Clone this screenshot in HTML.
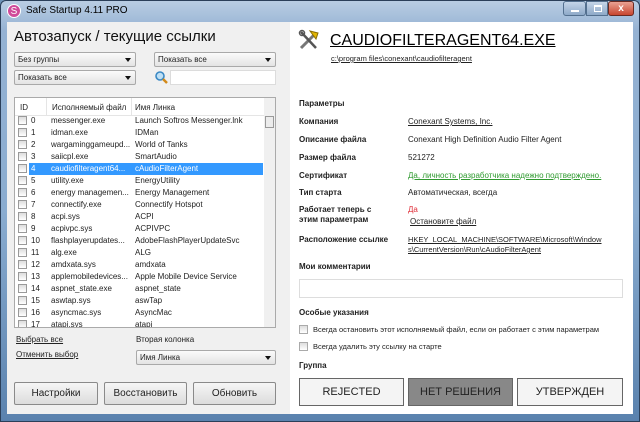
<!DOCTYPE html>
<html><head><meta charset="utf-8"><style>
*{box-sizing:border-box;margin:0;padding:0}
body{width:640px;height:422px;overflow:hidden;font-family:"Liberation Sans","DejaVu Sans",sans-serif;font-size:9px;color:#222;background:#6d93b8;position:relative}
.a{position:absolute;white-space:nowrap}
.frame{position:absolute;left:0;top:0;width:640px;height:422px;background:linear-gradient(#b9cde3,#95b2d3 30px,#8aacd0 50%,#5a82ae);border:1px solid #2b3f59;border-radius:6px 6px 0 0}
.left{position:absolute;left:7px;top:22px;width:283px;height:392px;background:#f0f0f0}
.right{position:absolute;left:290px;top:22px;width:343px;height:392px;background:#fff}
.combo{position:absolute;height:15px;background:linear-gradient(#fbfbfb,#e3e3e3);border:1px solid #a9a9a9;border-radius:2px;font-size:8px;padding:2px 3px}
.combo:after{content:"";position:absolute;right:4px;top:5px;border:3.5px solid transparent;border-top:4px solid #111}
.btn{position:absolute;background:linear-gradient(#f6f6f6,#dcdcdc);border:1px solid #8a8a8a;border-radius:2px;text-align:center;font-size:10px}
.row{position:absolute;left:0;width:249px;height:12px;font-size:8px}
.row .cb{position:absolute;left:4px;top:1px;width:9px;height:9px;border:1px solid #999;background:linear-gradient(#ddd,#fff)}
.row span{position:absolute;top:0;line-height:12px}
.lbl{position:absolute;left:299px;font-weight:bold;font-size:8px;white-space:nowrap}
.val{position:absolute;left:408px;font-size:8px;white-space:nowrap}
u{text-decoration:underline}
.rb{position:absolute;top:378px;height:28px;border:1px solid #666;background:#f4f4f4;text-align:center;line-height:26px;font-size:11px}
</style></head><body>
<div class="frame"></div>
<div class="a" style="left:7px;top:4px;width:14px;height:14px;border-radius:50%;background:#d04a9a;color:#fff;font-size:10px;text-align:center;line-height:13px;border:1px solid #fff">S</div>
<div class="a" style="left:26px;top:5px;font-size:10px;color:#000">Safe Startup 4.11 PRO</div>
<div class="a" style="left:563px;top:1px;width:23px;height:15px;border:1px solid #54708f;border-radius:3px;background:linear-gradient(#c5d5e8,#8ea9c8)"><div style="position:absolute;left:7px;top:8px;width:8px;height:2px;background:#fff"></div></div>
<div class="a" style="left:586px;top:1px;width:22px;height:15px;border:1px solid #54708f;background:linear-gradient(#c5d5e8,#8ea9c8)"><div style="position:absolute;left:7px;top:3px;width:8px;height:7px;border:1px solid #fff;border-top-width:2px"></div></div>
<div class="a" style="left:608px;top:1px;width:26px;height:15px;border:1px solid #6b2a22;border-radius:3px;background:linear-gradient(#e9a293,#c8452f);color:#fff;font-weight:bold;font-size:10px;text-align:center;line-height:13px">x</div>

<div class="left"></div>
<div class="right"></div>

<div class="a" style="left:14px;top:28px;font-size:15px;color:#111">Автозапуск / текущие ссылки</div>
<div class="combo" style="left:14px;top:52px;width:122px">Без группы</div>
<div class="combo" style="left:154px;top:52px;width:122px">Показать все</div>
<div class="combo" style="left:14px;top:70px;width:122px">Показать все</div>
<svg class="a" style="left:154px;top:70px" width="14" height="14"><circle cx="6" cy="6" r="4" fill="#bfe0f5" stroke="#3a88c4" stroke-width="1.6"/><line x1="9" y1="9" x2="13" y2="13" stroke="#d28a1a" stroke-width="2.5"/></svg>
<div class="a" style="left:170px;top:70px;width:106px;height:15px;background:#fff;border:1px solid #dcdcdc"></div>

<div class="a" style="left:14px;top:97px;width:262px;height:231px;background:#fff;border:1px solid #aaa;overflow:hidden">
 <div class="a" style="left:0;top:0;width:249px;height:18px;border-bottom:1px solid #e5e5e5;font-size:8px">
  <span class="a" style="left:5px;top:5px">ID</span><span class="a" style="left:37px;top:5px">Исполняемый файл</span><span class="a" style="left:120px;top:5px">Имя Линка</span>
  <div class="a" style="left:31px;top:0;width:1px;height:18px;background:#e5e5e5"></div>
  <div class="a" style="left:116px;top:0;width:1px;height:18px;background:#e5e5e5"></div>
 </div>
 <div class="a" style="left:249px;top:0;width:12px;height:229px;background:#f0f0f0"><div style="position:absolute;left:1px;top:18px;width:9px;height:12px;border:1px solid #999;background:#ececec"></div></div>
</div>
<div class="a" style="left:14px;top:115px">
<div class="row" style="top:0"><div class="cb"></div><span style="left:17px">0</span><span style="left:37px">messenger.exe</span><span style="left:121px">Launch Softros Messenger.lnk</span></div>
<div class="row" style="top:12px"><div class="cb"></div><span style="left:17px">1</span><span style="left:37px">idman.exe</span><span style="left:121px">IDMan</span></div>
<div class="row" style="top:24px"><div class="cb"></div><span style="left:17px">2</span><span style="left:37px">wargaminggameupd...</span><span style="left:121px">World of Tanks</span></div>
<div class="row" style="top:36px"><div class="cb"></div><span style="left:17px">3</span><span style="left:37px">saiicpl.exe</span><span style="left:121px">SmartAudio</span></div>
<div class="row" style="top:48px;color:#fff"><div style="position:absolute;left:15px;top:0;width:234px;height:12px;background:#3399ff"></div><div class="cb"></div><span style="left:17px">4</span><span style="left:37px">caudiofilteragent64...</span><span style="left:121px">cAudioFilterAgent</span></div>
<div class="row" style="top:60px"><div class="cb"></div><span style="left:17px">5</span><span style="left:37px">utility.exe</span><span style="left:121px">EnergyUtility</span></div>
<div class="row" style="top:72px"><div class="cb"></div><span style="left:17px">6</span><span style="left:37px">energy managemen...</span><span style="left:121px">Energy Management</span></div>
<div class="row" style="top:84px"><div class="cb"></div><span style="left:17px">7</span><span style="left:37px">connectify.exe</span><span style="left:121px">Connectify Hotspot</span></div>
<div class="row" style="top:96px"><div class="cb"></div><span style="left:17px">8</span><span style="left:37px">acpi.sys</span><span style="left:121px">ACPI</span></div>
<div class="row" style="top:108px"><div class="cb"></div><span style="left:17px">9</span><span style="left:37px">acpivpc.sys</span><span style="left:121px">ACPIVPC</span></div>
<div class="row" style="top:120px"><div class="cb"></div><span style="left:17px">10</span><span style="left:37px">flashplayerupdates...</span><span style="left:121px">AdobeFlashPlayerUpdateSvc</span></div>
<div class="row" style="top:132px"><div class="cb"></div><span style="left:17px">11</span><span style="left:37px">alg.exe</span><span style="left:121px">ALG</span></div>
<div class="row" style="top:144px"><div class="cb"></div><span style="left:17px">12</span><span style="left:37px">amdxata.sys</span><span style="left:121px">amdxata</span></div>
<div class="row" style="top:156px"><div class="cb"></div><span style="left:17px">13</span><span style="left:37px">applemobiledevices...</span><span style="left:121px">Apple Mobile Device Service</span></div>
<div class="row" style="top:168px"><div class="cb"></div><span style="left:17px">14</span><span style="left:37px">aspnet_state.exe</span><span style="left:121px">aspnet_state</span></div>
<div class="row" style="top:180px"><div class="cb"></div><span style="left:17px">15</span><span style="left:37px">aswtap.sys</span><span style="left:121px">aswTap</span></div>
<div class="row" style="top:192px"><div class="cb"></div><span style="left:17px">16</span><span style="left:37px">asyncmac.sys</span><span style="left:121px">AsyncMac</span></div>
<div class="row" style="top:204px;height:8px;overflow:hidden"><div class="cb"></div><span style="left:17px">17</span><span style="left:37px">atapi.sys</span><span style="left:121px">atapi</span></div>
</div>

<div class="a" style="left:16px;top:335px;font-size:8px"><u>Выбрать все</u></div>
<div class="a" style="left:16px;top:350px;font-size:8px"><u>Отменить выбор</u></div>
<div class="a" style="left:136px;top:335px;font-size:8px">Вторая колонка</div>
<div class="combo" style="left:136px;top:350px;width:140px">Имя Линка</div>
<div class="btn" style="left:14px;top:382px;width:84px;height:23px;line-height:21px">Настройки</div>
<div class="btn" style="left:104px;top:382px;width:83px;height:23px;line-height:21px">Восстановить</div>
<div class="btn" style="left:193px;top:382px;width:83px;height:23px;line-height:21px">Обновить</div>

<svg class="a" style="left:298px;top:29px" width="22" height="22"><line x1="3" y1="19" x2="17" y2="5" stroke="#777" stroke-width="3"/><line x1="3" y1="3" x2="18" y2="19" stroke="#555" stroke-width="2.5"/><path d="M12 2 L20 4 L18 10 Z" fill="#e2b500" stroke="#8a6c00" stroke-width="1"/><circle cx="4" cy="4" r="2.5" fill="none" stroke="#555" stroke-width="1.5"/></svg>
<div class="a" style="left:330px;top:32px;font-size:16px;color:#000"><u>CAUDIOFILTERAGENT64.EXE</u></div>
<div class="a" style="left:331px;top:54px;font-size:7.5px"><u>c:\program files\conexant\caudiofilteragent</u></div>

<div class="lbl" style="top:99px">Параметры</div>
<div class="lbl" style="top:117px">Компания</div><div class="val" style="top:117px"><u>Conexant Systems, Inc.</u></div>
<div class="lbl" style="top:135px">Описание файла</div><div class="val" style="top:135px">Conexant High Definition Audio Filter Agent</div>
<div class="lbl" style="top:153px">Размер файла</div><div class="val" style="top:153px">521272</div>
<div class="lbl" style="top:171px">Сертификат</div><div class="val" style="top:171px;color:#2f9a2f"><u>Да, личность разработчика надежно подтверждено.</u></div>
<div class="lbl" style="top:188px">Тип старта</div><div class="val" style="top:188px">Автоматическая, всегда</div>
<div class="lbl" style="top:205px;line-height:10px">Работает теперь с<br>этим параметрам</div>
<div class="val" style="top:205px;color:#e0303a">Да</div>
<div class="val" style="top:217px;left:410px"><u>Остановите файл</u></div>
<div class="lbl" style="top:235px">Расположение ссылке</div>
<div class="val" style="top:235px;line-height:10px;font-size:7.5px"><u>HKEY_LOCAL_MACHINE\SOFTWARE\Microsoft\Window</u><br><u>s\CurrentVersion\Run\cAudioFilterAgent</u></div>
<div class="lbl" style="top:262px">Мои комментарии</div>
<div class="a" style="left:299px;top:279px;width:324px;height:19px;border:1px solid #ddd"></div>
<div class="lbl" style="top:308px">Особые указания</div>
<div class="a" style="left:299px;top:325px;width:9px;height:9px;border:1px solid #aaa;background:linear-gradient(#ddd,#fff)"></div>
<div class="val" style="left:313px;top:325px;font-size:7.5px">Всегда остановить этот исполняемый файл, если он работает с этим параметрам</div>
<div class="a" style="left:299px;top:342px;width:9px;height:9px;border:1px solid #aaa;background:linear-gradient(#ddd,#fff)"></div>
<div class="val" style="left:313px;top:342px;font-size:7.5px">Всегда удалить эту ссылку на старте</div>
<div class="lbl" style="top:361px">Группа</div>
<div class="rb" style="left:299px;width:105px">REJECTED</div>
<div class="rb" style="left:408px;width:105px;background:#888">НЕТ РЕШЕНИЯ</div>
<div class="rb" style="left:517px;width:106px">УТВЕРЖДЕН</div>
</body></html>
